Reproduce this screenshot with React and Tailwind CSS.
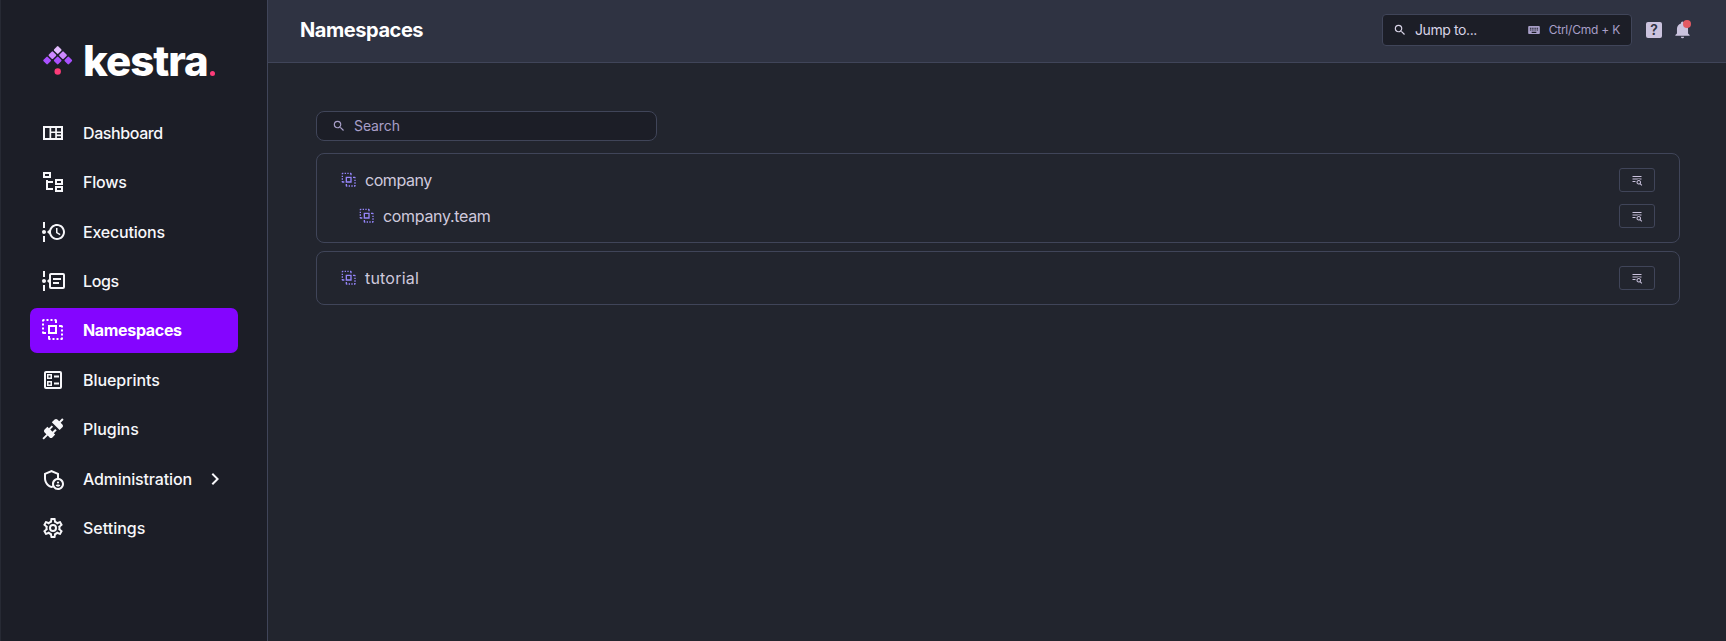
import React from 'react';
import { MdOutlineAdminPanelSettings, MdKeyboard } from 'react-icons/md';

const ICONS = {
  dashboard: 'M2 5v14h20V5H2m2 2h4.5v10H4V7m6.2 0h4v3.4h-4V7m5.7 0H20v3.4h-4.1V7m-5.7 5h4v5h-4v-5m5.7 0H20v1.6h-4.1V12m0 3.2H20V17h-4.1v-1.8z',
  flows: 'M12 13H7v5h5v2H5V10h2v1h5v2M8 4v2H4V4h4m2-2H2v6h8V2m10 9v2h-4v-2h4m2-2h-8v6h8V9m-2 9v2h-4v-2h4m2-2h-8v6h8v-6z',
  executions: 'M4 2v6H2V2h2M2 22v-6h2v6H2m3-10c0 1.11-.89 2-2 2a2 2 0 0 1-2-2c0-1.11.89-2 2-2s2 .89 2 2m11-8c4.42 0 8 3.58 8 8s-3.58 8-8 8c-3.6 0-6.64-2.38-7.65-5.65L6 12l2.35-2.35C9.36 6.38 12.4 4 16 4m0 2c-3.31 0-6 2.69-6 6s2.69 6 6 6 6-2.69 6-6-2.69-6-6-6m-1 2h1.5v4.2l3 1.8-.75 1.23L15 13V8z',
  logs: 'M4 2v6H2V2h2M2 22v-6h2v6H2m3-10c0 1.11-.89 2-2 2a2 2 0 0 1-2-2c0-1.11.89-2 2-2s2 .89 2 2M22 4a2 2 0 0 1 2 2v12a2 2 0 0 1-2 2H10a2 2 0 0 1-2-2v-4l-2-2 2-2V6c0-1.11.89-2 2-2h12m0 2H10v12h12V6m-10 3h8v2h-8V9m0 4h6v2h-6v-2z',
  namespaces: 'M7 7h9v9H7V7m2 2v5h5V9H9M1 3V2.500A1.5 1.5 0 0 1 2.5 1H3.500v2H3v.5H1V3M5.500 1h2v2h-2V1m4 0h2v2h-2V1m4 0h1A1.5 1.5 0 0 1 16 2.5V5h-2V3h-.5V1M1 5.500h2v2H1v-2m0 4h2v2H1v-2m0 4h2v.5h2v2H2.5A1.5 1.5 0 0 1 1 14.5v-1M22 19.500v1a1.5 1.5 0 0 1-1.5 1.5h-1v-2h.5v-.5h2M17.500 22h-2v-2h2v2m-4 0h-2v-2h2v2m-4 0h-1A1.5 1.5 0 0 1 7 20.500V18h2v2h.5v2M22 17.500h-2v-2h2v2m0-4h-2v-2h2v2m0-4h-2V9h-2V7h2.500A1.5 1.5 0 0 1 22 8.500v1z',
  blueprints: 'M5 3h14a2 2 0 0 1 2 2v14a2 2 0 0 1-2 2H5a2 2 0 0 1-2-2V5c0-1.1.9-2 2-2m0 2v14h14V5H5m1 1h5v5H6V6m1.5 1.5v2h2v-2h-2M6 13h5v5H6v-5m1.5 1.5v2h2v-2h-2M13 7.5h5v2h-5v-2m0 7h5v2h-5v-2z',
  plugins: 'M21.4 7.5c.8.8.8 2.1 0 2.8l-2.8 2.8-7.8-7.8 2.8-2.8c.8-.8 2.1-.8 2.8 0l1.8 1.8 3-3 1.4 1.4-3 3 1.8 1.8m-5.8 5.8-1.4-1.4-2.8 2.8-2.1-2.1 2.8-2.8-1.4-1.4-2.8 2.8-1.5-1.4-2.8 2.8c-.8.8-.8 2.1 0 2.8l1.8 1.8-4 4 1.4 1.4 4-4 1.8 1.8c.8.8 2.1.8 2.8 0l2.8-2.8-1.4-1.4 2.8-2.8z',
  settings: 'M12 8a4 4 0 0 1 4 4 4 4 0 0 1-4 4 4 4 0 0 1-4-4 4 4 0 0 1 4-4m0 2a2 2 0 0 0-2 2 2 2 0 0 0 2 2 2 2 0 0 0 2-2 2 2 0 0 0-2-2m-2 12c-.25 0-.46-.18-.5-.42l-.37-2.65c-.63-.25-1.17-.59-1.69-.99l-2.49 1.01c-.22.08-.49 0-.61-.22l-2-3.46c-.13-.22-.07-.49.12-.64l2.11-1.66L4.5 12l.07-1-2.11-1.63c-.19-.15-.25-.42-.12-.64l2-3.46c.12-.22.39-.31.61-.22l2.49 1c.52-.39 1.06-.73 1.69-.98l.37-2.65c.04-.24.25-.42.5-.42h4c.25 0 .46.18.5.42l.37 2.65c.63.25 1.17.59 1.69.98l2.49-1c.22-.09.49 0 .61.22l2 3.46c.13.22.07.49-.12.64L19.43 11l.07 1-.07 1 2.11 1.63c.19.15.25.42.12.64l-2 3.46c-.12.22-.39.31-.61.22l-2.49-1c-.52.39-1.06.73-1.69.98l-.37 2.65c-.04.24-.25.42-.5.42h-4m1.25-18-.37 2.61c-1.2.25-2.26.89-3.03 1.78L5.44 7.35l-.75 1.3L6.8 10.2a5.55 5.55 0 0 0 0 3.6l-2.12 1.56.75 1.3 2.43-1.04c.77.88 1.82 1.52 3.01 1.76l.37 2.62h1.52l.37-2.61c1.19-.25 2.24-.89 3.01-1.77l2.43 1.04.75-1.3-2.12-1.55c.4-1.17.4-2.44 0-3.61l2.11-1.55-.75-1.3-2.41 1.04a5.42 5.42 0 0 0-3.03-1.77L12.75 4h-1.5z',
  chevron: 'M8.59 16.58 13.17 12 8.59 7.41 10 6l6 6-6 6-1.41-1.42z',
  magnify: 'M9.5 3A6.5 6.5 0 0 1 16 9.5c0 1.61-.59 3.09-1.56 4.23l.27.27h.79l5 5-1.5 1.5-5-5v-.79l-.27-.27A6.516 6.516 0 0 1 9.5 16 6.5 6.5 0 0 1 3 9.5 6.5 6.5 0 0 1 9.5 3m0 2C7 5 5 7 5 9.5S7 14 9.5 14 14 12 14 9.5 12 5 9.5 5z',
  bell: 'M21 19v1H3v-1l2-2v-6c0-3.1 2.03-5.83 5-6.71V4a2 2 0 0 1 2-2 2 2 0 0 1 2 2v.29c2.97.88 5 3.61 5 6.71v6l2 2m-7 2a2 2 0 0 1-2 2 2 2 0 0 1-2-2h4z',
  textSearch: 'M19.31 18.9 22.39 22 21 23.39l-3.12-3.07c-.69.43-1.51.68-2.38.68-2.5 0-4.5-2-4.5-4.5s2-4.5 4.5-4.5 4.5 2 4.5 4.5c0 .88-.25 1.71-.69 2.4M15.5 19a2.5 2.5 0 0 0 0-5 2.5 2.5 0 0 0 0 5M21 4v2H3V4h18M3 16v-2h6v2H3m0-5V9h18v2h-2.03c-1.01-.63-2.2-1-3.47-1s-2.46.37-3.47 1H3z',
};

const Icon = ({ name, size = 24, className = '' }) => (
  <svg width={size} height={size} viewBox="0 0 24 24" fill="currentColor" fillRule="evenodd" className={`shrink-0 ${className}`}>
    <path d={ICONS[name]} />
  </svg>
);

const MENU = [
  { label: 'Dashboard', icon: 'dashboard', text: 'tracking-[-0.4px]' },
  { label: 'Flows', icon: 'flows', text: 'tracking-[-0.2px]' },
  { label: 'Executions', icon: 'executions', text: 'tracking-[-0.2px]' },
  { label: 'Logs', icon: 'logs', text: 'tracking-[-0.4px]' },
  { label: 'Namespaces', icon: 'namespaces', active: true, text: 'tracking-[-0.33px]' },
  { label: 'Blueprints', icon: 'blueprints', text: 'tracking-[-0.05px]' },
  { label: 'Plugins', icon: 'plugins', text: 'tracking-[-0.05px]' },
  { label: 'Administration', icon: 'admin', children: true, text: 'tracking-[-0.15px]' },
  { label: 'Settings', icon: 'settings', text: '' },
];

const GROUPS = [
  [
    { id: 'company', text: 'tracking-[-0.45px]' },
    { id: 'company.team', nested: true, text: 'tracking-[-0.32px]' },
  ],
  [{ id: 'tutorial', text: 'tracking-[0.2px]' }],
];

const Logo = () => (
  <div className="flex h-[45px] items-center pl-[42px]">
    <svg width="30" height="32" viewBox="0 0 30 32" className="shrink-0">
      <g transform="translate(14.7 0)">
        <rect x="-3" y="-3" width="6" height="6" rx="1" transform="translate(0 5) rotate(45)" fill="#e3bcff" />
        <rect x="-3" y="-3" width="6" height="6" rx="1" transform="translate(-5.3 10.2) rotate(45)" fill="#cd88ff" />
        <rect x="-3" y="-3" width="6" height="6" rx="1" transform="translate(5.3 10.2) rotate(45)" fill="#cd88ff" />
        <rect x="-3" y="-3" width="6" height="6" rx="1" transform="translate(-10.6 15.5) rotate(45)" fill="#a950ff" />
        <rect x="-3" y="-3" width="6" height="6" rx="1" transform="translate(0 15.5) rotate(45)" fill="#a950ff" />
        <rect x="-3" y="-3" width="6" height="6" rx="1" transform="translate(10.6 15.5) rotate(45)" fill="#a950ff" />
        <circle cx="0" cy="26.5" r="3.2" fill="#fd3c79" />
      </g>
    </svg>
    <span className="ml-[10px] text-[42px] leading-[45px] font-extrabold tracking-[-1px] text-white">kestra</span>
    <span className="mt-[26px] ml-[2px] size-[5px] rounded-full bg-[#fd3c79]" />
  </div>
);

const MenuItem = ({ item }) => (
  <a
    className={`flex h-[44.6px] items-center rounded-[7px] pl-[11px] text-[16px] ${
      item.active ? 'bg-[#8405ff] font-bold text-white' : 'font-medium text-[#f7f7fa]'
    }`}
  >
    {item.icon === 'admin' ? (
      <MdOutlineAdminPanelSettings size={24} className="shrink-0" />
    ) : (
      <Icon name={item.icon} />
    )}
    <span className={`ml-[18px] ${item.text}`}>{item.label}</span>
    {item.children && <Icon name="chevron" className="mr-[11px] ml-auto" />}
  </a>
);

const Sidebar = () => (
  <aside className="flex w-[268px] shrink-0 flex-col border-r border-l border-r-[#404559] border-l-[#272a34] bg-[#1c1e27] pt-[38px]">
    <Logo />
    <nav className="mt-[27.6px] flex flex-col gap-[4.8px] px-[29px]">
      {MENU.map(item => (
        <MenuItem key={item.label} item={item} />
      ))}
    </nav>
  </aside>
);

const TopBar = () => (
  <header className="flex h-[63px] shrink-0 items-center border-b border-[#404559] bg-[#2f3342] pr-[34px] pb-[3px] pl-[32px]">
    <h1 className="text-[20px] font-bold tracking-[-0.44px] text-white">Namespaces</h1>
    <div className="ml-auto flex h-[32px] w-[250px] items-center rounded-[4px] border border-[#404559] bg-[#1c1e27] pr-[11px] pl-[10px] text-[14px] text-[#d8d3e6]">
      <Icon name="magnify" size={14} />
      <span className="ml-[8px] tracking-[-0.4px]">Jump to...</span>
      <MdKeyboard size={14} className="ml-auto text-[#a89fc8]" />
      <span className="ml-[8px] text-[12px] tracking-[-0.22px] text-[#a89fc8]">Ctrl/Cmd + K</span>
    </div>
    <div className="ml-[14px] flex size-4 items-center justify-center rounded-[2px] bg-[#cbc3de] text-[14px] font-semibold text-[#2f3342]">?</div>
    <div className="relative ml-[11px] text-[#cbc3de]">
      <Icon name="bell" size={19} />
      <span className="absolute top-0 right-px size-2 rounded-full bg-[#e35a62]" />
    </div>
  </header>
);

const NamespaceRow = ({ row }) => (
  <div className={`flex h-9 items-center text-[16px] text-[#cfc9dd] ${row.nested ? 'pl-[18px]' : ''}`}>
    <Icon name="namespaces" size={16} className="text-[#9585fa]" />
    <span className={`ml-[8px] pb-px ${row.text}`}>{row.id}</span>
    <button className="ml-auto flex h-6 w-9 items-center justify-center rounded-[3px] border border-[#404559] text-[#cbc3de]">
      <Icon name="textSearch" size={12} />
    </button>
  </div>
);

export default function App() {
  return (
    <div className="flex h-[641px] w-[1726px] overflow-hidden bg-[#22252e] font-['Inter',sans-serif]">
      <Sidebar />
      <div className="flex min-w-0 flex-1 flex-col">
        <TopBar />
        <main className="flex flex-col pt-[48px] pr-[46px] pl-[48px]">
          <div className="flex h-[30px] w-[341px] items-center rounded-[8px] border border-[#404559] bg-[#1c1e27] pl-[15px] text-[14px] text-[#a89fc8]">
            <Icon name="magnify" size={14} />
            <span className="ml-[8px] pb-[2px] tracking-[-0.1px]">Search</span>
          </div>
          <div className="mt-[12px] flex flex-col gap-[8px]">
            {GROUPS.map(rows => (
              <section key={rows[0].id} className="rounded-[8px] border border-[#404559] px-[24px] py-[8px]">
                {rows.map(row => (
                  <NamespaceRow key={row.id} row={row} />
                ))}
              </section>
            ))}
          </div>
        </main>
      </div>
    </div>
  );
}
